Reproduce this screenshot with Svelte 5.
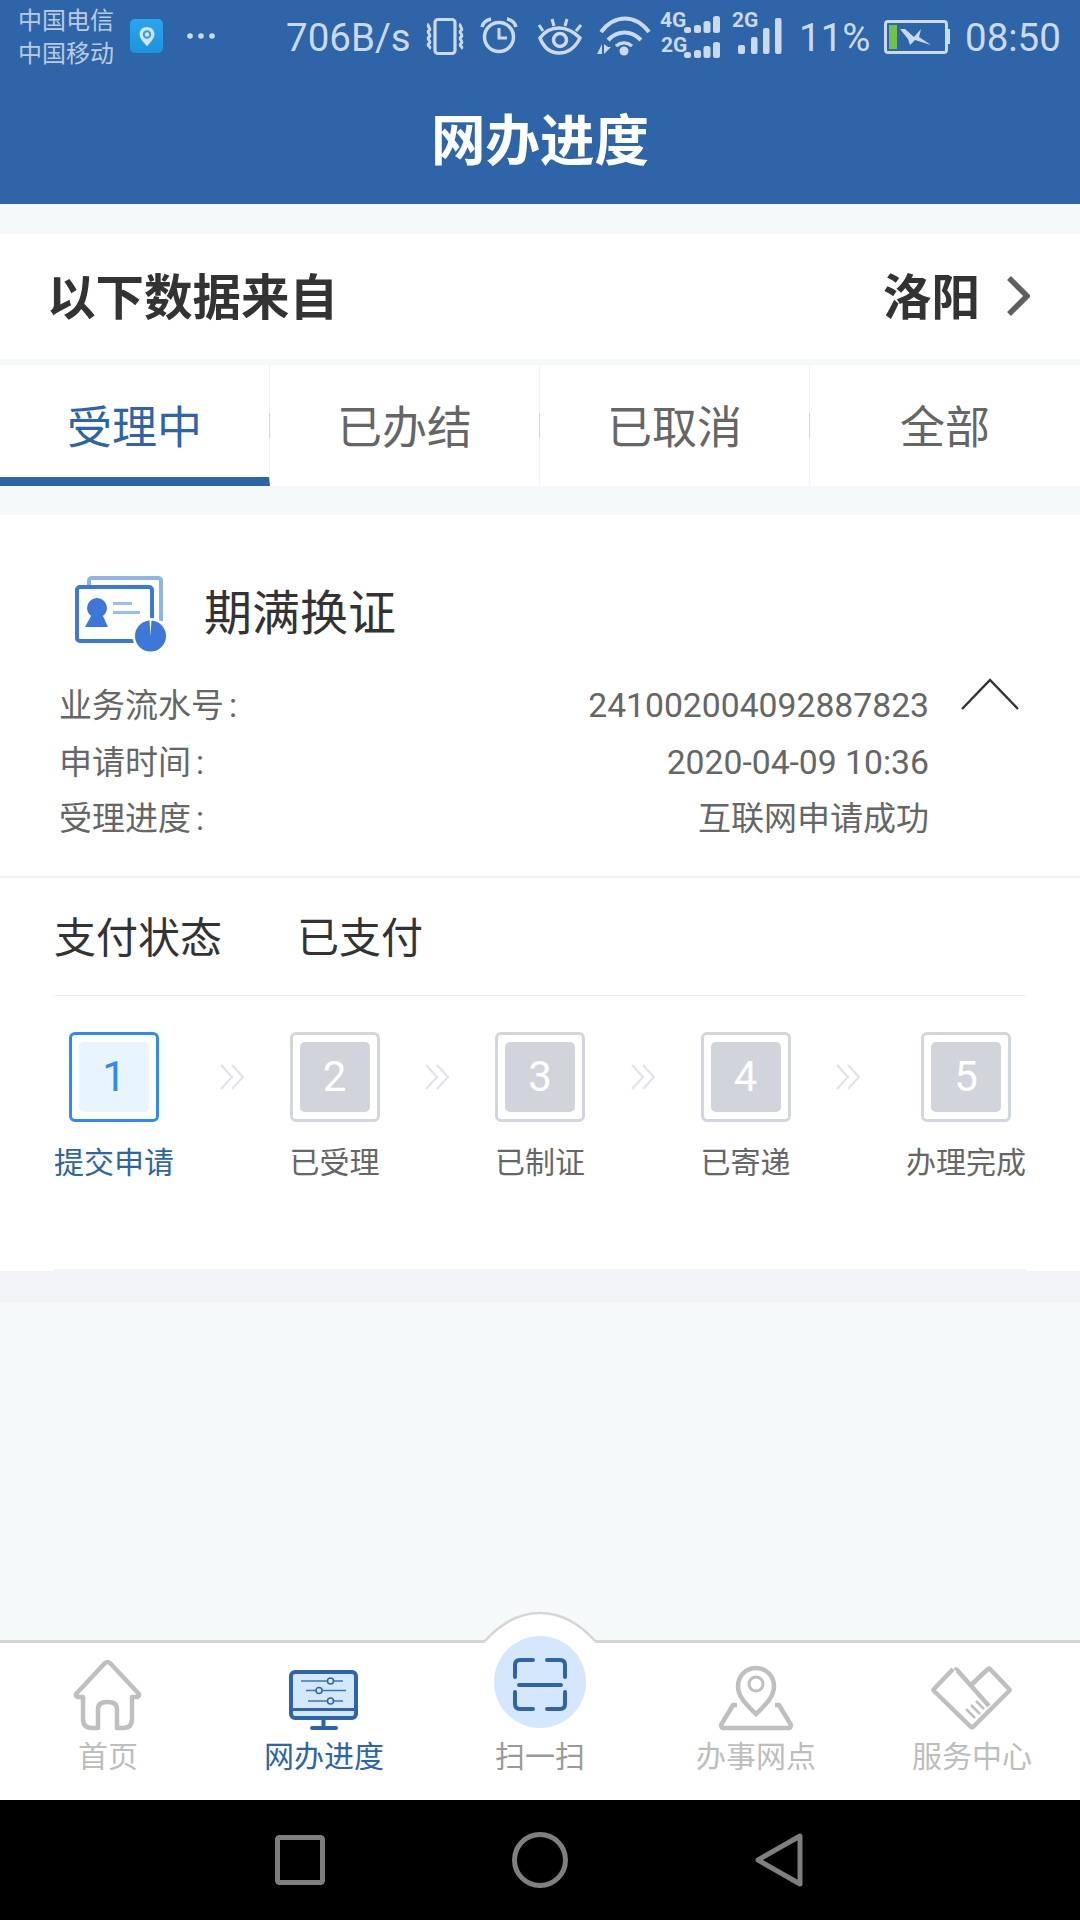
<script>
	const tabs = ['受理中', '已办结', '已取消', '全部'];

	const details = [
		{ label: '业务流水号', value: '241002004092887823', digits: true },
		{ label: '申请时间', value: '2020-04-09 10:36', digits: true },
		{ label: '受理进度', value: '互联网申请成功' }
	];

	const steps = [
		{ num: 1, label: '提交申请', active: true },
		{ num: 2, label: '已受理' },
		{ num: 3, label: '已制证' },
		{ num: 4, label: '已寄递' },
		{ num: 5, label: '办理完成' }
	];
</script>

<div class="screen">
	<header class="app-header">
		<div class="status-bar">
			<div class="carriers">
				<span>中国电信</span>
				<span>中国移动</span>
			</div>
			<svg class="sb" style="margin-left:16px" width="33" height="76" viewBox="130 0 33 76">
				<defs>
					<linearGradient id="appIcon" x1="0" y1="0" x2="0" y2="1">
						<stop offset="0" stop-color="#2ba6ee" />
						<stop offset="1" stop-color="#1b94dd" />
					</linearGradient>
				</defs>
				<rect x="130" y="19" width="33" height="34" rx="5" fill="url(#appIcon)" />
				<path d="M147 27c-4.400 0-7.500 3.200-7.500 7.200 0 3.800 4 8 7.500 12 3.500-4 7.500-8.200 7.500-12 0-4-3.100-7.200-7.500-7.200z" fill="#d3e4f2" />
				<circle cx="147" cy="34.500" r="3.200" fill="none" stroke="#2a9fe6" stroke-width="2" />
			</svg>
			<svg class="sb" style="margin-left:24px" width="28" height="76" viewBox="187 0 28 76">
				<circle cx="190" cy="36" r="2.800" class="f" />
				<circle cx="201" cy="36" r="2.800" class="f" />
				<circle cx="212" cy="36" r="2.800" class="f" />
			</svg>
			<span class="sb-text speed">706B/s</span>
			<svg class="sb" style="margin-left:11px" width="43" height="76" viewBox="423 0 43 76">
				<rect x="435" y="19.500" width="20" height="34" rx="3" class="s" stroke-width="3.200" />
				<path d="M429 24c-3 2.500 3 4.500 0 6.500s3 4.500 0 6.500 3 4.500 0 6.500 3 3.500 0 5M461 24c-3 2.500 3 4.500 0 6.500s3 4.500 0 6.500 3 4.500 0 6.500 3 3.500 0 5" class="s" stroke-width="3" />
			</svg>
			<svg class="sb" style="margin-left:14px" width="38" height="76" viewBox="480 0 38 76">
				<circle cx="499" cy="37" r="14.500" class="s" stroke-width="3.500" />
				<path d="M499 28v10h8" class="s" stroke-width="3" />
				<path d="M482 27c1-4 4-7 9-8M516 27c-1-4-4-7-9-8" class="s" stroke-width="3.500" />
			</svg>
			<svg class="sb" style="margin-left:19px" width="46" height="76" viewBox="537 0 46 76">
				<path d="M540 38c5-7 11-10 19-10s14 3 21 10c-5 10-12 15-21 15s-15-5-19-15z" class="s" stroke-width="3.500" />
				<circle cx="560" cy="40" r="6.500" class="s" stroke-width="3.500" />
				<path d="M552 19l2 7M567 19l-2 7M581 25l-5 6M539 25l4 6" class="s" stroke-width="3" />
			</svg>
			<svg class="sb" style="margin-left:13px" width="55" height="76" viewBox="596 0 55 76">
				<path d="M601 32c14-18 34-18 48 0" class="s" stroke-width="4" />
				<path d="M608 40c10-10 23-10 33 0" class="s" stroke-width="4" />
				<path d="M616 46c5-4 11-4 16 0" class="s" stroke-width="3.500" />
				<circle cx="624" cy="51" r="4.500" class="f" />
				<path d="M602 44v10h-5zM604 44v10l7-7h-3z" class="f" />
			</svg>
			<svg class="sb" style="margin-left:9px" width="60" height="76" viewBox="660 0 60 76">
				<text x="660" y="27" class="net">4G</text>
				<text x="661" y="52" class="net">2G</text>
				<g class="f">
					<rect x="684" y="27" width="7" height="6" rx="2.500" />
					<rect x="694" y="25" width="7" height="8" rx="2.500" />
					<rect x="703.500" y="21" width="7" height="12" rx="2.500" />
					<rect x="713" y="16" width="7" height="17" rx="2.500" />
					<rect x="684" y="52" width="7" height="6" rx="2.500" />
					<rect x="694" y="50" width="7" height="8" rx="2.500" />
					<rect x="703.500" y="46" width="7" height="12" rx="2.500" />
					<rect x="713" y="42" width="7" height="16" rx="2.500" />
				</g>
			</svg>
			<svg class="sb" style="margin-left:12px" width="50" height="76" viewBox="732 0 50 76">
				<text x="732" y="27" class="net">2G</text>
				<g class="f">
					<rect x="738" y="45" width="7" height="9" rx="2" />
					<rect x="751" y="37" width="6.500" height="17" rx="2" />
					<rect x="763" y="28" width="6.500" height="26" rx="2" />
					<rect x="775" y="18" width="6.500" height="36" rx="2" />
				</g>
			</svg>
			<span class="sb-text pct">11%</span>
			<svg class="sb" style="margin-left:14px" width="66" height="76" viewBox="884 0 66 76">
				<rect x="885.500" y="21.500" width="61" height="31" rx="2.500" class="s" stroke-width="3" />
				<rect x="947" y="29" width="3" height="15" class="f" />
				<rect x="889" y="25" width="8" height="24" fill="#72bf4b" />
				<path d="M900 29h5l9 8 7-8-2 8 12 8-16-5-5 5-2-6z" class="f" />
			</svg>
			<span class="sb-text time">08:50</span>
		</div>
		<h1>网办进度</h1>
	</header>

	<section class="source-row">
		<span>以下数据来自</span>
		<div class="city">
			<span>洛阳</span>
			<svg width="24" height="42" viewBox="0 0 24 42">
				<path d="M3 3l18 18-18 18" fill="none" stroke="#606060" stroke-width="5.500" />
			</svg>
		</div>
	</section>

	<nav class="tabs">
		{#each tabs as tab, i}
			<div class="tab" class:active={i === 0}>{tab}</div>
		{/each}
	</nav>

	<section class="card">
		<div class="card-head">
			<svg width="100" height="90" viewBox="70 570 100 90">
				<path d="M89 585v-4q0-3 3-3h66q3 0 3 3v40" fill="none" stroke="#8fb4ec" stroke-width="4" />
				<rect x="77" y="587" width="75" height="54" rx="3" fill="#fff" stroke="#3d78d8" stroke-width="4" />
				<circle cx="97" cy="608" r="10" fill="#3d78d8" />
				<path d="M85 627l6-11h12l5 11z" fill="#3d78d8" />
				<path d="M113 603.500h19M113 612.500h27" stroke="#9abdf0" stroke-width="3" />
				<circle cx="150.500" cy="636" r="18" fill="#fff" />
				<circle cx="150.500" cy="636" r="15.500" fill="#3d78d8" />
				<path d="M149.500 620h2l-1 16z" fill="#fff" />
			</svg>
			<h2>期满换证</h2>
		</div>

		<div class="detail-wrap">
			<div class="details">
				{#each details as row}
					<div class="detail-row">
						<span>{row.label}<span class="colon">:</span></span>
						<span class:digits={row.digits}>{row.value}</span>
					</div>
				{/each}
			</div>
			<svg class="collapse" width="58" height="32" viewBox="0 0 58 32">
				<path d="M1 31L29 2l28 29" fill="none" stroke="#333" stroke-width="2.400" />
			</svg>
		</div>

		<div class="pay-row">
			<span class="pay-label">支付状态</span>
			<span>已支付</span>
		</div>

		<div class="steps">
			{#each steps as step, i}
				{#if i > 0}
					<svg class="arrow" width="24" height="26" viewBox="0 0 24 26">
						<path d="M1 1l11 12L1 25M12 1l11 12-11 12" fill="none" stroke="#e0e3ea" stroke-width="2.200" />
					</svg>
				{/if}
				<div class="step" class:current={step.active}>
					<div class="step-box">
						<div class="step-num">{step.num}</div>
					</div>
					<span>{step.label}</span>
				</div>
			{/each}
		</div>
	</section>
	<div class="card-foot"></div>

	<div class="spacer"></div>

	<footer class="bottom-nav">
		<svg class="bump" width="120" height="34" viewBox="480 1611 120 34">
			<path d="M485 1641Q510 1613 540 1613T595 1641V1645H485z" fill="#fff" />
			<path d="M485 1641Q510 1613 540 1613T595 1641" fill="none" stroke="#d6d6d6" stroke-width="2.600" />
		</svg>

		<div class="nav-item">
			<svg width="100" height="86" viewBox="58 1652 100 86">
				<path d="M83 1696h-5q-3-1-2-3l29-31q2.500-2 5 0l29 31q1 2-2 3h-5v22q0 9-9 9h-6v-19q0-7-9.500-7t-9.500 7v19h-6q-9 0-9-9z" fill="none" stroke="#bfbfbf" stroke-width="4.500" stroke-linejoin="round" />
			</svg>
			<span>首页</span>
		</div>

		<div class="nav-item active">
			<svg width="100" height="86" viewBox="274 1652 100 86">
				<rect x="291" y="1671" width="65" height="46" rx="4" fill="#d5e7fd" stroke="#2d65a8" stroke-width="4" />
				<path d="M291 1708.500h65" stroke="#2d65a8" stroke-width="3" />
				<path d="M323.500 1718v9" stroke="#2d65a8" stroke-width="4" />
				<path d="M312 1727h24" stroke="#2d65a8" stroke-width="4" stroke-linecap="round" />
				<path d="M301 1680h42M306 1689.500h40M308 1700h35" stroke="#3f75b5" stroke-width="1.500" />
				<circle cx="330.500" cy="1680" r="3" fill="#d5e7fd" stroke="#2d65a8" stroke-width="1.500" />
				<circle cx="319" cy="1689.500" r="3" fill="#d5e7fd" stroke="#2d65a8" stroke-width="1.500" />
				<circle cx="330.500" cy="1700" r="3" fill="#d5e7fd" stroke="#2d65a8" stroke-width="1.500" />
			</svg>
			<span>网办进度</span>
		</div>

		<div class="nav-item scan">
			<svg width="100" height="86" viewBox="490 1652 100 86">
				<path d="M533 1659h-13q-5 0-5 5v12M515 1691v12q0 5 5 5h13M547 1659h13q5 0 5 5v12M565 1691v12q0 5-5 5h-13M519 1684h42" fill="none" stroke="#2d65a8" stroke-width="4" stroke-linecap="round" />
			</svg>
			<span>扫一扫</span>
		</div>

		<div class="nav-item">
			<svg width="100" height="86" viewBox="706 1652 100 86">
				<path d="M737 1704h-4l-12 20q0 3 3 3h64q3 0 3-3l-12-20h-4" fill="none" stroke="#bfbfbf" stroke-width="4.500" stroke-linejoin="round" />
				<path d="M756 1713c-8-8-18-16-18-28 0-10 8-18 18-18s18 8 18 18c0 12-10 20-18 28z" fill="#fff" stroke="#bfbfbf" stroke-width="4.500" />
				<circle cx="756" cy="1683" r="7" fill="none" stroke="#bfbfbf" stroke-width="3" />
			</svg>
			<span>办事网点</span>
		</div>

		<div class="nav-item">
			<svg width="100" height="86" viewBox="922 1652 100 86">
				<path d="M955 1669q1-1 2 0l32 36M970 1685l18-17q1-1 2 0l19 20q1 1 0 2l-36 36q-1 1-2 0l-37-36q-1-1 0-2l19-20" fill="none" stroke="#bfbfbf" stroke-width="4.500" stroke-linejoin="round" />
				<path d="M966 1708l9 9M971 1704l9 9M976 1700l8 8" stroke="#bfbfbf" stroke-width="2.500" />
			</svg>
			<span>服务中心</span>
		</div>
	</footer>

	<div class="system-bar">
		<svg width="54" height="54" viewBox="0 0 54 54">
			<rect x="4.500" y="4.500" width="45" height="45" rx="2" fill="none" stroke="#7f7f7f" stroke-width="5" />
		</svg>
		<svg width="56" height="56" viewBox="0 0 56 56">
			<circle cx="28" cy="28" r="25.500" fill="none" stroke="#7f7f7f" stroke-width="5" />
		</svg>
		<svg width="50" height="56" viewBox="0 0 50 56">
			<path d="M4 28L46 4v48z" fill="none" stroke="#7f7f7f" stroke-width="5" stroke-linejoin="round" />
		</svg>
	</div>
</div>

<style>
	:global(body) {
		margin: 0;
	}

	.screen {
		width: 1080px;
		height: 1920px;
		display: flex;
		flex-direction: column;
		background: #f5f9fa;
		overflow: hidden;
		font-family: Roboto, "Noto Sans CJK SC", sans-serif;
	}

	/* Header and status bar */
	.app-header {
		height: 204px;
		background: #2d65a8;
		flex: none;
	}

	.status-bar {
		height: 76px;
		display: flex;
		align-items: center;
		padding-left: 18px;
		color: #cbd9ea;
	}

	.sb {
		flex: none;
		display: block;
	}

	.s {
		fill: none;
		stroke: #cbd9ea;
	}

	.f {
		fill: #cbd9ea;
	}

	.net {
		font-family: Roboto, sans-serif;
		font-size: 21px;
		font-weight: 700;
		fill: #cbd9ea;
	}

	.carriers {
		width: 96px;
		display: flex;
		flex-direction: column;
		font-size: 24px;
		line-height: 33px;
		color: #b9cbe2;
	}

	.sb-text {
		font-size: 38.500px;
		line-height: 76px;
		white-space: nowrap;
	}

	.speed {
		margin-left: 71px;
		width: 126px;
	}

	.pct {
		margin-left: 17px;
		width: 71px;
	}

	.time {
		margin-left: 15px;
	}

	.app-header h1 {
		margin: 0;
		height: 128px;
		line-height: 130px;
		text-align: center;
		font-size: 54.500px;
		font-weight: 700;
		color: #fff;
	}

	/* Source row */
	.source-row {
		margin-top: 30px;
		height: 125px;
		box-sizing: border-box;
		line-height: 120px;
		padding: 5px 50px 0 47px;
		background: #fff;
		display: flex;
		align-items: center;
		justify-content: space-between;
		font-size: 48.500px;
		font-weight: 700;
		color: #333;
		flex: none;
	}

	.city {
		display: flex;
		align-items: center;
		gap: 26px;
	}

	.city svg {
		margin-top: -6px;
	}

	/* Tabs */
	.tabs {
		margin-top: 6px;
		height: 121px;
		display: grid;
		grid-template-columns: repeat(4, 270px);
		background: #fff;
		flex: none;
	}

	.tab {
		position: relative;
		box-sizing: border-box;
		height: 121px;
		text-align: center;
		font-size: 45px;
		line-height: 127px;
		color: #666;
		border-right: 1px solid #f3f3f3;
	}

	.tab:last-child {
		border-right: none;
	}

	.tab::after {
		content: '';
		position: absolute;
		right: -1px;
		top: 48px;
		width: 1px;
		height: 25px;
		background: #d4d4d4;
	}

	.tab:last-child::after {
		display: none;
	}

	.tab.active {
		color: #2d65a8;
		border-bottom: 9px solid #2d65a8;
	}

	/* Card */
	.card {
		margin-top: 29px;
		height: 756px;
		background: #fff;
		flex: none;
		display: flex;
		flex-direction: column;
	}

	.card-head {
		display: flex;
		align-items: center;
		height: 90px;
		padding: 55px 0 0 70px;
	}

	.card-head h2 {
		margin: 0 0 12px 34px;
		font-size: 48px;
		font-weight: 400;
		color: #333;
	}

	.detail-wrap {
		display: flex;
		padding: 18px 60px 28px 59px;
		border-bottom: 2px solid #f1f1f1;
	}

	.details {
		flex: 1;
	}

	.detail-row {
		display: flex;
		justify-content: space-between;
		font-size: 33px;
		line-height: 56.500px;
		color: #666;
	}

	.colon {
		margin-left: 5px;
	}

	.digits {
		font-size: 33.700px;
	}

	.collapse {
		flex: none;
		margin-left: 32px;
		margin-right: 1px;
	}

	.pay-row {
		margin: 0 54px;
		height: 118px;
		padding-bottom: 3px;
		display: flex;
		align-items: center;
		font-size: 42px;
		color: #333;
		border-bottom: 1px solid #eeeeee;
		box-sizing: border-box;
	}

	.pay-label {
		width: 243px;
	}

	/* Steps */
	.steps {
		flex: 1;
		margin: 0 54px;
		padding-top: 36px;
		display: flex;
		justify-content: space-between;
		align-items: flex-start;
		border-bottom: 2px solid #f3f4f8;
	}

	.arrow {
		margin-top: 32px;
		flex: none;
	}

	.step {
		display: flex;
		flex-direction: column;
		align-items: center;
		font-size: 30px;
		color: #666;
	}

	.step span {
		margin-top: 23px;
		line-height: 36px;
		white-space: nowrap;
	}

	.step-box {
		width: 90px;
		height: 90px;
		box-sizing: border-box;
		padding: 7px;
		border: 3px solid #d3d6dd;
		border-radius: 6px;
	}

	.step-num {
		height: 100%;
		border-radius: 5px;
		background: #d1d4da;
		color: #fff;
		font-size: 42px;
		line-height: 70px;
		text-align: center;
	}

	.step.current {
		color: #2d65a8;
	}

	.step.current .step-box {
		border-color: #2c8cf4;
	}

	.step.current .step-num {
		background: #e8f4ff;
		color: #2f8af0;
	}

	.card-foot {
		height: 32px;
		background: #f3f4f8;
		flex: none;
	}

	.spacer {
		flex: 1;
	}

	/* Bottom nav */
	.bottom-nav {
		position: relative;
		height: 160px;
		box-sizing: border-box;
		display: grid;
		grid-template-columns: repeat(5, 216px);
		background: #fff;
		border-top: 3px solid #d6d6d6;
		flex: none;
	}

	.bump {
		position: absolute;
		left: 480px;
		top: -32px;
	}

	.nav-item {
		position: relative;
		display: flex;
		flex-direction: column;
		align-items: center;
		padding-top: 10px;
		font-size: 30px;
		color: #bdbdbd;
	}

	.nav-item svg {
		display: block;
		position: relative;
	}

	.nav-item span {
		line-height: 36px;
	}

	.nav-item.active {
		color: #2d65a8;
	}

	.nav-item.scan {
		color: #999;
	}

	.nav-item.scan::before {
		content: '';
		position: absolute;
		left: 62px;
		top: -7px;
		width: 92px;
		height: 92px;
		border-radius: 50%;
		background: #d5e7fd;
	}

	/* Android nav bar */
	.system-bar {
		height: 120px;
		background: #000;
		flex: none;
		display: flex;
		align-items: center;
		padding-left: 273px;
	}

	.system-bar svg:nth-child(2) {
		margin-left: 185px;
	}

	.system-bar svg:nth-child(3) {
		margin-left: 186px;
	}
</style>
